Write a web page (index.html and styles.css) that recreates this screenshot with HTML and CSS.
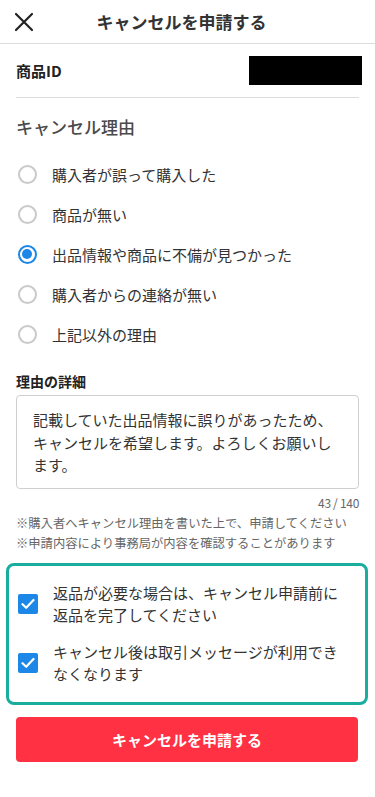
FILE: index.html
```html
<!DOCTYPE html>
<html lang="ja">
<head>
<meta charset="utf-8">
<meta name="viewport" content="width=device-width, initial-scale=1">
<title>キャンセルを申請する</title>
<link rel="stylesheet" href="styles.css">
</head>
<body>
<header class="header">
  <button class="close" aria-label="閉じる">
    <svg width="20" height="20" viewBox="0 0 20 20"><path d="M2 2 L18 18 M18 2 L2 18" stroke="#222" stroke-width="2.2" stroke-linecap="round" fill="none"/></svg>
  </button>
  <h1 class="title">キャンセルを申請する</h1>
</header>

<main class="content">
  <div class="id-row">
    <span class="id-label">商品ID</span>
    <span class="id-mask"></span>
  </div>

  <h2 class="section-title">キャンセル理由</h2>

  <ul class="radios">
    <li class="radio-row"><span class="radio"></span><span>購入者が誤って購入した</span></li>
    <li class="radio-row"><span class="radio"></span><span>商品が無い</span></li>
    <li class="radio-row"><span class="radio checked"></span><span>出品情報や商品に不備が見つかった</span></li>
    <li class="radio-row"><span class="radio"></span><span>購入者からの連絡が無い</span></li>
    <li class="radio-row"><span class="radio"></span><span>上記以外の理由</span></li>
  </ul>

  <h3 class="detail-title">理由の詳細</h3>
  <div class="textarea">記載していた出品情報に誤りがあったため、キャンセルを希望します。よろしくお願いします。</div>
  <div class="counter">43 / 140</div>

  <p class="notes">※購入者へキャンセル理由を書いた上で、申請してください<br>※申請内容により事務局が内容を確認することがあります</p>
</main>

<section class="confirm">
  <div class="check-row">
    <span class="check"><svg width="14" height="12" viewBox="0 0 14 12"><path d="M1.5 6.2 L5.2 9.8 L12.5 2" stroke="#fff" stroke-width="2.2" fill="none" stroke-linecap="round" stroke-linejoin="round"/></svg></span>
    <span class="check-text">返品が必要な場合は、キャンセル申請前に返品を完了してください</span>
  </div>
  <div class="check-row">
    <span class="check"><svg width="14" height="12" viewBox="0 0 14 12"><path d="M1.5 6.2 L5.2 9.8 L12.5 2" stroke="#fff" stroke-width="2.2" fill="none" stroke-linecap="round" stroke-linejoin="round"/></svg></span>
    <span class="check-text">キャンセル後は取引メッセージが利用できなくなります</span>
  </div>
</section>

<div class="actions">
  <button class="submit">キャンセルを申請する</button>
</div>
</body>
</html>
```

FILE: styles.css
```css
* { box-sizing: border-box; }
html, body { margin: 0; padding: 0; background: #fff; }
body {
  width: 375px;
  font-family: "Noto Sans CJK JP", "Noto Sans", sans-serif;
  color: #333;
}
.header {
  height: 44px;
  border-bottom: 1px solid #dcdcdc;
  display: flex;
  align-items: center;
}
.close {
  border: 0;
  background: none;
  padding: 0;
  margin-left: 14px;
  width: 20px;
  height: 20px;
  display: flex;
}
.title {
  flex: 1;
  margin: 0;
  padding-right: 46px;
  text-align: center;
  font-size: 17px;
  font-weight: 700;
  color: #333;
  line-height: 1;
}
.content { padding: 0 16px; }
.id-row {
  height: 54px;
  border-bottom: 1px solid #dcdcdc;
  display: flex;
  align-items: center;
  justify-content: space-between;
}
.id-label { font-size: 15px; font-weight: 700; color: #222; }
.id-mask {
  width: 113px;
  height: 29px;
  background: #000;
  margin-right: -3px;
}
.section-title {
  margin: 17px 0 0;
  font-size: 17px;
  font-weight: 500;
  color: #4a4a4a;
  line-height: 24px;
}
.radios { list-style: none; margin: 15px 0 0; padding: 0; }
.radio-row {
  height: 40px;
  display: flex;
  align-items: center;
  gap: 15px;
  font-size: 15px;
  color: #333;
}
.radio {
  width: 19px;
  height: 19px;
  margin-left: 2px;
  border-radius: 50%;
  border: 2.5px solid #c9c9c9;
  flex: none;
  position: relative;
}
.radio.checked { border-color: #1c87e6; }
.radio.checked::after {
  content: "";
  position: absolute;
  left: 2px; top: 2px;
  width: 10px; height: 10px;
  border-radius: 50%;
  background: #1c87e6;
}
.detail-title {
  margin: 17px 0 0;
  font-size: 14px;
  font-weight: 700;
  color: #222;
  line-height: 20px;
}
.textarea {
  margin-top: 4px;
  height: 94px;
  border: 1px solid #cfcfcf;
  border-radius: 4px;
  padding: 13px 16px 0 16px;
  font-size: 15px;
  line-height: 22.5px;
  color: #333;
}
.counter {
  text-align: right;
  font-size: 12px;
  color: #666;
  margin-top: 6px;
  line-height: 16px;
  letter-spacing: -0.3px;
}
.notes {
  margin: 2px 0 0;
  font-size: 12.3px;
  line-height: 20px;
  color: #666;
}
.confirm {
  margin: 10px 7px 0 6px;
  border: 3px solid #1aad9e;
  border-radius: 8px;
  padding: 16px 20px 17px 9px;
  display: flex;
  flex-direction: column;
  gap: 15px;
}
.check-row {
  display: flex;
  align-items: center;
  gap: 15px;
}
.check {
  width: 20px;
  height: 20px;
  flex: none;
  border-radius: 2px;
  background: #1c87e6;
  display: flex;
  align-items: center;
  justify-content: center;
}
.check-text {
  font-size: 15px;
  line-height: 22px;
  color: #333;
}
.actions { padding: 12px 17px 0 16px; }
.submit {
  width: 100%;
  height: 45px;
  border: 0;
  border-radius: 4px;
  background: #ff3142;
  color: #fff;
  font-family: "Noto Sans CJK JP", "Noto Sans", sans-serif;
  font-size: 15px;
  font-weight: 700;
}
```
